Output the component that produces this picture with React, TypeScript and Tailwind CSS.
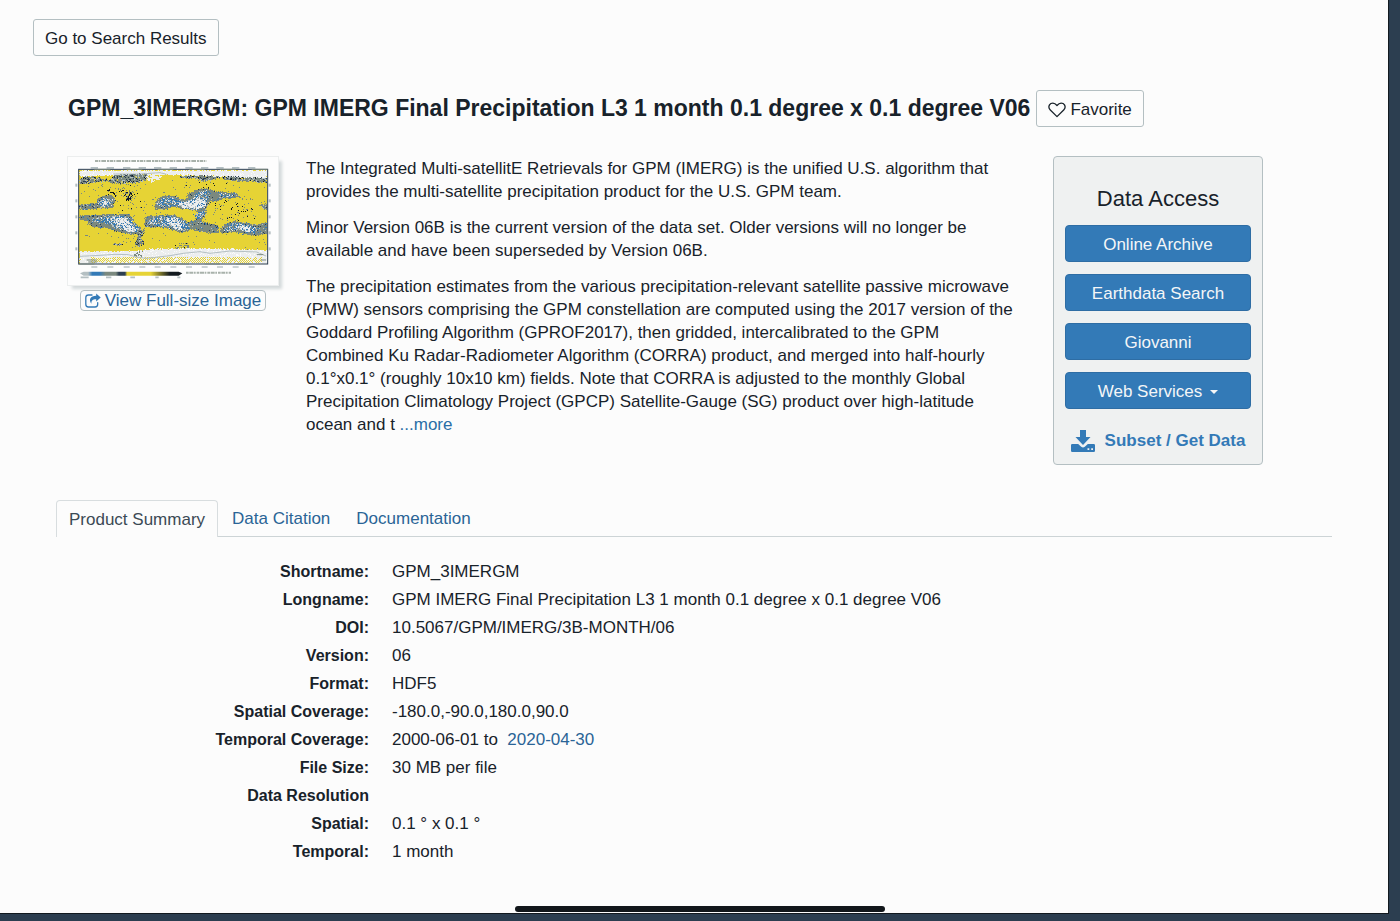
import type { ReactNode } from "react";

type Point = [number, number];
type Tone = [string, number];
type Region = { shape: Point[]; tones: Tone[] };

const YELLOW = "#e6d335";
const GREY = "#7b897f";
const SILVER = "#b4bfc2";
const PALE = "#eceeee";
const BLUE = "#337ab7";
const NAVY = "#2c3e50";
const BLACK = "#12191f";

const CELL = 3;
const MAP = { left: 87, top: 75, right: 651, bottom: 357 };

const cloud: Tone[] = [[GREY, 0.86], [BLUE, 0.05], [NAVY, 0.05], [SILVER, 0.04]];
const rain: Tone[] = [[BLUE, 0.36], [SILVER, 0.3], [GREY, 0.24], [PALE, 0.1]];
const heavy: Tone[] = [[PALE, 0.62], [SILVER, 0.24], [BLUE, 0.14]];
const land: Tone[] = [[GREY, 0.62], [NAVY, 0.15], [BLACK, 0.04], [SILVER, 0.14], [YELLOW, 0.05]];
const specks: Tone[] = [[BLACK, 0.06], [GREY, 0.1], [YELLOW, 0.84]];
const lightSpecks: Tone[] = [[BLACK, 0.015], [GREY, 0.035], [YELLOW, 0.95]];

// Later regions are drawn over earlier ones.
const regions: Region[] = [
  { shape: [[87, 75], [651, 75], [651, 98], [560, 95], [450, 90], [350, 88], [180, 90], [87, 93]], tones: [[PALE, 0.88], ["#fbfbfb", 0.12]] },
  { shape: [[87, 96], [120, 93], [175, 104], [195, 88], [290, 85], [288, 104], [240, 117], [205, 118], [170, 108], [130, 112], [87, 115]], tones: land },
  { shape: [[290, 88], [334, 88], [328, 101], [302, 110], [288, 102]], tones: [[PALE, 0.75], [YELLOW, 0.25]] },
  { shape: [[390, 92], [450, 90], [510, 92], [505, 100], [455, 108], [430, 98], [390, 100]], tones: land },
  { shape: [[515, 93], [580, 95], [651, 96], [651, 112], [610, 108], [560, 108], [515, 101]], tones: land },
  { shape: [[140, 115], [270, 112], [280, 200], [200, 205], [150, 140]], tones: lightSpecks },
  { shape: [[190, 130], [235, 124], [262, 150], [245, 170], [220, 174], [218, 150]], tones: specks },
  { shape: [[225, 140], [248, 142], [244, 160], [226, 168]], tones: [[BLACK, 0.4], [YELLOW, 0.35], [GREY, 0.25]] },
  { shape: [[150, 117], [158, 117], [200, 152], [194, 153]], tones: [[BLACK, 0.5], [YELLOW, 0.5]] },
  { shape: [[480, 168], [610, 160], [620, 225], [500, 225]], tones: lightSpecks },
  { shape: [[550, 172], [590, 165], [595, 205], [555, 205]], tones: specks },
  { shape: [[370, 110], [560, 108], [540, 135], [420, 132]], tones: lightSpecks },
  { shape: [[87, 177], [138, 172], [142, 158], [168, 148], [188, 152], [196, 166], [188, 187], [150, 188], [130, 192], [87, 192]], tones: cloud },
  { shape: [[145, 168], [162, 158], [186, 162], [180, 182], [150, 187]], tones: rain },
  { shape: [[155, 169], [168, 165], [172, 180], [156, 183]], tones: heavy },
  { shape: [[312, 180], [322, 160], [342, 150], [375, 151], [392, 162], [411, 158], [410, 145], [432, 135], [465, 127], [490, 135], [510, 138], [560, 143], [572, 154], [545, 158], [520, 158], [500, 166], [480, 168], [468, 190], [464, 210], [452, 228], [430, 226], [444, 202], [438, 194], [395, 191], [370, 184], [340, 193], [318, 193]], tones: cloud },
  { shape: [[320, 176], [330, 160], [350, 156], [378, 160], [400, 169], [425, 160], [440, 143], [470, 135], [476, 155], [462, 184], [445, 192], [395, 187], [365, 180], [335, 187]], tones: rain },
  { shape: [[378, 174], [412, 170], [440, 160], [468, 160], [463, 183], [446, 190], [400, 187]], tones: heavy },
  { shape: [[430, 207], [460, 195], [466, 205], [445, 222]], tones: rain },
  { shape: [[505, 145], [550, 146], [548, 155], [512, 154]], tones: rain },
  { shape: [[87, 210], [150, 208], [232, 205], [246, 214], [248, 228], [270, 246], [276, 258], [262, 267], [235, 266], [190, 256], [170, 246], [150, 249], [120, 243], [112, 227], [87, 224]], tones: cloud },
  { shape: [[122, 220], [165, 213], [222, 209], [240, 220], [268, 252], [250, 261], [205, 251], [178, 236], [150, 232], [125, 226]], tones: rain },
  { shape: [[182, 218], [222, 214], [240, 236], [257, 256], [236, 259], [210, 244], [192, 233]], tones: heavy },
  { shape: [[262, 265], [285, 246], [278, 268], [270, 275], [283, 292], [265, 302], [252, 296], [260, 282]], tones: land },
  { shape: [[280, 240], [284, 215], [300, 210], [370, 208], [395, 218], [410, 230], [440, 222], [470, 233], [500, 238], [506, 261], [480, 264], [455, 258], [425, 252], [400, 263], [370, 256], [335, 245], [295, 246]], tones: cloud },
  { shape: [[292, 236], [300, 216], [365, 212], [390, 222], [425, 236], [415, 252], [395, 256], [345, 244], [310, 241]], tones: rain },
  { shape: [[345, 220], [370, 215], [394, 230], [393, 252], [372, 250]], tones: heavy },
  { shape: [[508, 256], [522, 238], [550, 226], [585, 232], [618, 238], [651, 230], [651, 260], [620, 272], [580, 266], [550, 258], [515, 266]], tones: cloud },
  { shape: [[522, 250], [548, 233], [590, 237], [625, 248], [612, 264], [565, 254], [525, 257]], tones: rain },
  { shape: [[558, 239], [584, 239], [605, 252], [598, 262], [570, 251]], tones: heavy },
  { shape: [[630, 178], [651, 175], [651, 192], [635, 190]], tones: cloud },
  { shape: [[370, 298], [415, 292], [420, 308], [370, 307]], tones: [[GREY, 0.4], [BLACK, 0.1], [YELLOW, 0.5]] },
  { shape: [[186, 294], [214, 296], [212, 301], [188, 299]], tones: land },
  { shape: [[87, 318], [245, 317], [300, 310], [480, 309], [651, 314], [651, 357], [87, 357]], tones: [[PALE, 0.86], ["#fbfbfb", 0.14]] },
  { shape: [[250, 322], [276, 316], [275, 335], [255, 333]], tones: [[GREY, 0.5], [PALE, 0.5]] },
];

function inside(x: number, y: number, shape: Point[]) {
  let hit = false;
  for (let i = 0, j = shape.length - 1; i < shape.length; j = i++) {
    const [xi, yi] = shape[i];
    const [xj, yj] = shape[j];
    if (yi > y !== yj > y && x < ((xj - xi) * (y - yi)) / (yj - yi) + xi) hit = !hit;
  }
  return hit;
}

function buildLayers() {
  let seed = 20200430;
  const random = () => {
    seed = (seed * 1664525 + 1013904223) % 4294967296;
    return seed / 4294967296;
  };
  const layers: Record<string, string> = {};
  for (let y = MAP.top; y < MAP.bottom; y += CELL) {
    for (let x = MAP.left; x < MAP.right; x += CELL) {
      const jx = x + (random() - 0.5) * 7;
      const jy = y + (random() - 0.5) * 5;
      let tones: Tone[] | null = null;
      for (const region of regions) if (inside(jx, jy, region.shape)) tones = region.tones;
      let color = "";
      if (tones) {
        let pick = random();
        for (const [tone, share] of tones) {
          color = tone;
          pick -= share;
          if (pick < 0) break;
        }
      } else if (random() < 0.012) {
        color = GREY;
      }
      const column = x / CELL;
      const row = (y - MAP.top) / CELL;
      const dotted = y > 334 && y < 354 && x > 120 && x < 636;
      if (dotted && (column + row) % 2 === 0 && random() < 0.8) color = YELLOW;
      if (color) layers[color] = (layers[color] ?? "") + `M${x} ${y}h3v3h-3z`;
    }
  }
  return Object.entries(layers);
}

const layers = buildLayers();
const lonTicks = [133, 181, 230, 277, 323, 370, 417, 464, 510, 557, 605];
const latTicks = [120, 167, 215, 263, 311];

function PrecipitationMap() {
  return (
    <svg viewBox="54 36 630 384" className="block h-32 w-[210px]" role="img" aria-label="Precipitation map">
      <path d="M135 48H470" stroke={GREY} strokeWidth="6" strokeDasharray="9 2 5 3 14 3 7 2" opacity="0.65" />
      <g fill={SILVER}>
        {lonTicks.map((x) => (
          <g key={x}>
            <path d={`M${x - 11} 66h22v5h-22z`} />
            <path d={`M${x - 9} 364h18v4h-18z`} />
          </g>
        ))}
        {latTicks.map((y) => (
          <g key={y}>
            <path d={`M76 ${y - 4}h6v9h-6z`} />
            <path d={`M656 ${y - 4}h6v9h-6z`} />
          </g>
        ))}
      </g>
      <rect x="87" y="75" width="564" height="282" fill={YELLOW} />
      <g shapeRendering="crispEdges">
        {layers.map(([color, d]) => (
          <path key={color} d={d} fill={color} />
        ))}
      </g>
      <g fill="none" stroke={SILVER} strokeWidth="3">
        <path d="M90 334L150 331L195 328L235 329L258 336L290 340L360 332L400 325L450 320L480 325L540 318L620 321L648 333" />
        <path d="M190 87H270L330 83L350 88" />
        <path d="M110 345h30M115 351h26M620 329h20M632 345h16" stroke={GREY} />
      </g>
      <rect x="86" y="73" width="567" height="284" fill="none" stroke={NAVY} strokeWidth="3" />
      <path d="M133 73h48M230 73h47M323 73h47M417 73h47M510 73h47M605 73h48M86 357h47M181 357h49M277 357h46M370 357h47M464 357h46M557 357h48" stroke={GREY} strokeWidth="3" />
      <defs>
        <linearGradient id="scale">
          <stop offset="0" stopColor={SILVER} />
          <stop offset="0.08" stopColor={SILVER} />
          <stop offset="0.12" stopColor={BLUE} />
          <stop offset="0.19" stopColor={BLUE} />
          <stop offset="0.25" stopColor={GREY} />
          <stop offset="0.35" stopColor={GREY} />
          <stop offset="0.38" stopColor={NAVY} />
          <stop offset="0.44" stopColor={NAVY} />
          <stop offset="0.46" stopColor={YELLOW} />
          <stop offset="0.69" stopColor={YELLOW} />
          <stop offset="0.88" stopColor={BLACK} />
          <stop offset="1" stopColor={BLACK} />
        </linearGradient>
      </defs>
      <path d="M90 385L101 380H386L397 385L386 392H101Z" fill="url(#scale)" />
      <path d="M92 397h24M168 397h16M241 397h14M316 397h10M382 397h9" stroke={SILVER} strokeWidth="5" />
      <path d="M408 383H543" stroke={GREY} strokeWidth="6" strokeDasharray="8 2 12 2 5 3" opacity="0.65" />
    </svg>
  );
}

function HeartIcon() {
  return (
    <svg viewBox="0 0 18 16" className="h-4 w-[18px]" fill="none" stroke="currentColor" strokeWidth="1.3" strokeLinejoin="round" aria-hidden="true">
      <path d="M9 14.600L2.300 8C.8 6.500.7 4.300 1.500 2.900C2.300 1.500 3.500 1.100 4.900 1.100C6.700 1.100 8 2.300 9 3.500C10 2.300 11.300 1.100 13.100 1.100C14.500 1.100 15.700 1.500 16.500 2.900C17.300 4.300 17.200 6.500 15.700 8Z" />
    </svg>
  );
}

function ShareIcon() {
  return (
    <svg viewBox="0 0 16 15" className="h-[15px] w-4 shrink-0" aria-hidden="true">
      <path d="M7 2H3.500C1.900 2 .8 3.100.8 4.700V11.300C.8 12.900 1.900 14 3.500 14H10C11.600 14 12.700 12.900 12.700 11.300V9.600" fill="none" stroke="currentColor" strokeWidth="1.300" strokeLinecap="round" />
      <path d="M11.200.4L15.700 4.500L11.200 8.600V6.200C8.200 6.100 6.200 7 6.400 10.800C3.400 6.800 5.300 2.900 11.200 2.800Z" fill="currentColor" />
    </svg>
  );
}

function DownloadIcon() {
  return (
    <svg viewBox="0 0 24 22" className="h-[22px] w-6 shrink-0" fill="currentColor" aria-hidden="true">
      <path d="M9 0H15V7H19.500L12 15L4.500 7H9Z" />
      <path fillRule="evenodd" d="M1.200 14H7.200L10.200 16.800Q12 18 13.800 16.800L16.800 14H22.800Q24 14 24 15.200V20.800Q24 22 22.800 22H1.200Q0 22 0 20.800V15.200Q0 14 1.200 14ZM16.500 18.300V20.100H18.300V18.300ZM20.200 18.300V20.100H22V18.300Z" />
    </svg>
  );
}

function AccessButton({ children }: { children: ReactNode }) {
  return (
    <button className="flex h-[37px] w-full items-center justify-center rounded border border-[#2e6da4] bg-[#337ab7] pt-0.5 text-[#f4f6f7]">
      {children}
    </button>
  );
}

const details: [string, ReactNode][] = [
  ["Shortname:", "GPM_3IMERGM"],
  ["Longname:", "GPM IMERG Final Precipitation L3 1 month 0.1 degree x 0.1 degree V06"],
  ["DOI:", "10.5067/GPM/IMERG/3B-MONTH/06"],
  ["Version:", "06"],
  ["Format:", "HDF5"],
  ["Spatial Coverage:", "-180.0,-90.0,180.0,90.0"],
  ["Temporal Coverage:", <>2000-06-01 to&nbsp; <span className="text-[#2a6496]">2020-04-30</span></>],
  ["File Size:", "30 MB per file"],
  ["Data Resolution", ""],
  ["Spatial:", "0.1 ° x 0.1 °"],
  ["Temporal:", "1 month"],
];

export default function App() {
  return (
    <div className="flex min-h-screen flex-col bg-[#2c3e50] pr-[11px] pb-[7px] font-['Liberation_Sans',Arial,sans-serif] text-[17px] leading-[23px] text-[#18222a]">
      <main className="flex grow flex-col border-r border-b border-[#12191f] bg-[#fcfcfc]">
        <div className="pt-[19px] pl-[33px]">
          <button className="h-[37px] rounded-[3px] border border-[#b4bfc2] px-[11px] pt-0.5">Go to Search Results</button>
        </div>

        <header className="mt-[34px] flex items-center gap-1.5 pl-[68px]">
          <h1 className="text-[23px] leading-[37px] font-bold whitespace-nowrap">
            GPM_3IMERGM: GPM IMERG Final Precipitation L3 1 month 0.1 degree x 0.1 degree V06
          </h1>
          <button className="flex h-[37px] items-center gap-1 rounded-[3px] border border-[#b4bfc2] px-[11px] pt-0.5">
            <HeartIcon />
            Favorite
          </button>
        </header>

        <div className="mt-[29px] flex items-start pl-[68px]">
          <div className="flex w-[210px] shrink-0 flex-col items-center pt-px">
            <div className="bg-[#fdfdfd] shadow-[0_0_0_1px_#eceeee,4px_4px_3px_#d3d9da]">
              <PrecipitationMap />
            </div>
            <a href="#full-size" className="mt-[5px] flex h-[21px] items-center gap-1 rounded border border-[#b4bfc2] px-1 whitespace-nowrap text-[#2a6496]">
              <span className="text-[#337ab7]"><ShareIcon /></span>
              View Full-size Image
            </a>
          </div>

          <div className="ml-7 w-[706px] space-y-[13px] pt-px whitespace-nowrap">
            <p>
              The Integrated Multi-satellitE Retrievals for GPM (IMERG) is the unified U.S. algorithm that<br />
              provides the multi-satellite precipitation product for the U.S. GPM team.
            </p>
            <p>
              Minor Version 06B is the current version of the data set. Older versions will no longer be<br />
              available and have been superseded by Version 06B.
            </p>
            <p>
              The precipitation estimates from the various precipitation-relevant satellite passive microwave<br />
              (PMW) sensors comprising the GPM constellation are computed using the 2017 version of the<br />
              Goddard Profiling Algorithm (GPROF2017), then gridded, intercalibrated to the GPM<br />
              Combined Ku Radar-Radiometer Algorithm (CORRA) product, and merged into half-hourly<br />
              0.1°x0.1° (roughly 10x10 km) fields. Note that CORRA is adjusted to the monthly Global<br />
              Precipitation Climatology Project (GPCP) Satellite-Gauge (SG) product over high-latitude<br />
              ocean and t <a href="#more" className="text-[#2a6ea6]">...more</a>
            </p>
          </div>

          <aside className="ml-[41px] w-[210px] shrink-0 rounded border border-[#b4bfc2] bg-[#eff1f1] px-[11px] pt-7 pb-3">
            <h2 className="text-center text-[22px] leading-7">Data Access</h2>
            <div className="mt-3 flex flex-col gap-3">
              <AccessButton>Online Archive</AccessButton>
              <AccessButton>Earthdata Search</AccessButton>
              <AccessButton>Giovanni</AccessButton>
              <AccessButton>
                Web Services
                <svg viewBox="0 0 8 4" className="ml-2 h-1 w-2" fill="currentColor" aria-hidden="true"><path d="M0 0h8L4 4z" /></svg>
              </AccessButton>
            </div>
            <a href="#subset" className="mt-5 flex items-center justify-center gap-2.5 font-bold whitespace-nowrap text-[#337ab7]">
              <DownloadIcon />
              Subset / Get Data
            </a>
          </aside>
        </div>

        <nav className="mt-[35px] mr-14 ml-14 flex border-b border-[#cdd4d6]" role="tablist">
          <button role="tab" aria-selected="true" className="-mb-px h-[37px] rounded-t border border-b-0 border-[#d8dddf] bg-[#fcfcfc] px-3 text-[#3b4a55]">Product Summary</button>
          <button role="tab" aria-selected="false" className="ml-0.5 px-3 pt-px text-[#2a6496]">Data Citation</button>
          <button role="tab" aria-selected="false" className="ml-0.5 px-3 pt-px text-[#2a6496]">Documentation</button>
        </nav>

        <dl className="mt-[21px] leading-7">
          {details.map(([label, value]) => (
            <div key={label} className="flex h-7 gap-[23px]">
              <dt className="w-[369px] shrink-0 text-right text-[16px] font-bold">{label}</dt>
              <dd>{value}</dd>
            </div>
          ))}
        </dl>

        <div className="mx-auto mt-auto mb-px h-1.5 w-[370px] translate-x-1.5 rounded-full bg-[#12171b]" />
      </main>
    </div>
  );
}
